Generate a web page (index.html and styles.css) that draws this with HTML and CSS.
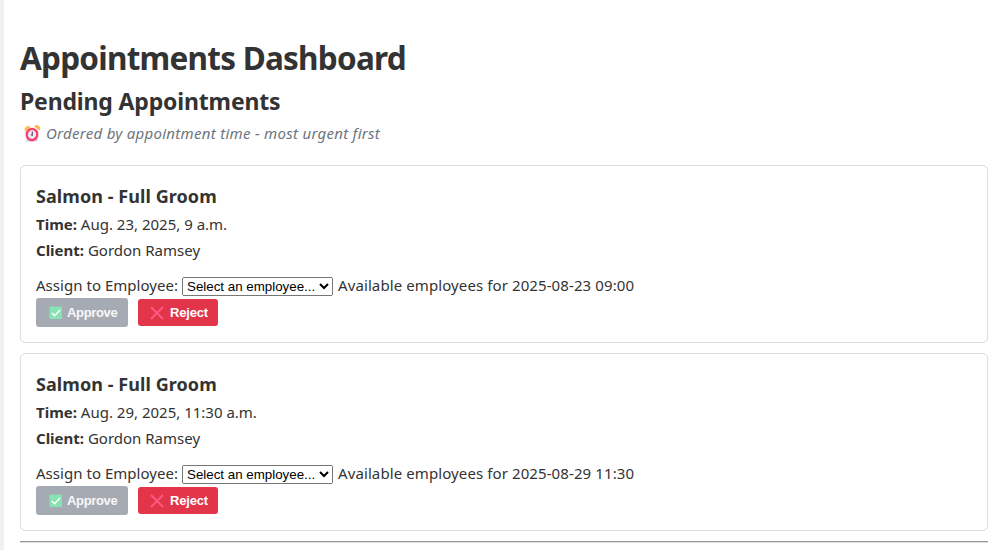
FILE: index.html
```html
<!DOCTYPE html>
<html lang="en">
<head>
<meta charset="utf-8">
<title>Appointments Dashboard</title>
<link rel="stylesheet" href="styles.css">
</head>
<body>
<main class="page">
<h1 class="title">Appointments Dashboard</h1>
<h2 class="subtitle">Pending Appointments</h2>
<p class="note"><svg class="clock" viewBox="0 0 18 18"><path d="M2 16.500h12l1-3H5z" fill="#d9c9f3"/><path d="M2.500 6.500A3.200 3.200 0 0 1 7.500 2.300zM16.500 5.500A3.200 3.200 0 0 0 11 1.600z" fill="#ffb84d"/><ellipse cx="9" cy="9.500" rx="5.300" ry="5.600" fill="#f3e9f5" stroke="#f8406c" stroke-width="2.400" transform="rotate(15 9 9.500)"/><path d="M9.300 6.500v3.700l-1.400-.5" fill="none" stroke="#5d4866" stroke-width="1.100"/></svg><span class="hint">Ordered by appointment time - most urgent first</span></p>
<section class="card">
<h3 class="name">Salmon - Full Groom</h3>
<p class="row"><b>Time:</b> Aug. 23, 2025, 9 a.m.</p>
<p class="row"><b>Client:</b> Gordon Ramsey</p>
<div class="assign"><label class="label">Assign to Employee:</label><select class="pick"><option>Select an employee...</option></select><span class="available">Available employees for 2025-08-23 09:00</span></div>
<div class="actions"><button class="btn approve" type="button"><svg class="mark" viewBox="0 0 14 14"><rect x=".5" y=".5" width="12.500" height="12.500" rx=".8" fill="#88e3b4"/><path d="m3 7 2.600 2.700L11 4" fill="none" stroke="#fff" stroke-width="1.500"/></svg>Approve</button><button class="btn reject" type="button"><svg class="mark" viewBox="0 0 14 14"><path d="m1 1 12 12M13 1 1 13" stroke="#ff5883" stroke-width="1.800"/></svg>Reject</button></div>
</section>
<section class="card">
<h3 class="name">Salmon - Full Groom</h3>
<p class="row"><b>Time:</b> Aug. 29, 2025, 11:30 a.m.</p>
<p class="row"><b>Client:</b> Gordon Ramsey</p>
<div class="assign"><label class="label">Assign to Employee:</label><select class="pick"><option>Select an employee...</option></select><span class="available">Available employees for 2025-08-29 11:30</span></div>
<div class="actions"><button class="btn approve" type="button"><svg class="mark" viewBox="0 0 14 14"><rect x=".5" y=".5" width="12.500" height="12.500" rx=".8" fill="#88e3b4"/><path d="m3 7 2.600 2.700L11 4" fill="none" stroke="#fff" stroke-width="1.500"/></svg>Approve</button><button class="btn reject" type="button"><svg class="mark" viewBox="0 0 14 14"><path d="m1 1 12 12M13 1 1 13" stroke="#ff5883" stroke-width="1.800"/></svg>Reject</button></div>
</section>
<hr class="rule">
</main>
</body>
</html>
```
FILE: styles.css
```css
* { box-sizing: border-box; }
body { margin: 0; height: 550px; overflow: hidden; background: #fff; color: #333; font: 15px/25.6px "Segoe UI", "Noto Sans", sans-serif; }
.page { height: 550px; border-left: 4px solid #eff0f2; padding: 36px 16px 0; }
h1, h2, h3, p { margin: 0; white-space: nowrap; }
.title { font-size: 31.5px; line-height: 44px; font-weight: 700; letter-spacing: -.76px; }
.subtitle { font-size: 23px; line-height: 32px; margin-top: 5px; font-weight: 700; letter-spacing: -.16px; }
.note { display: flex; align-items: center; gap: 5px; padding-left: 3px; height: 26px; margin-top: 4px; margin-bottom: 18px; color: #6c757d; font-style: italic; }
.hint { letter-spacing: .28px; }
.clock { flex: none; width: 18px; height: 18px; }
.card { height: 178px; border: 1px solid #ddd; border-radius: 5px; padding: 18px 15px 0; margin-bottom: 10px; }
.name { font-size: 18px; line-height: 25px; margin-bottom: 3px; font-weight: 700; letter-spacing: .07px; }
.row { height: 25.6px; }
.row b { letter-spacing: 0; }
.assign { display: flex; align-items: center; height: 26px; margin-top: 9.8px; white-space: nowrap; }
.label { width: 146px; letter-spacing: .03px; }
.pick { width: 151px; height: 19px; margin-right: 5px; margin-top: 1px; font: 13.333px Arial, "Liberation Sans", sans-serif; letter-spacing: 0; }
.available { letter-spacing: .1px; }
.actions { display: flex; align-items: center; height: 29px; gap: 10px; margin-top: -1px; }
.btn { display: flex; align-items: center; gap: 4px; border: 0; border-radius: 3px; padding: 1px 0 0 13px; color: #fff; font: bold 13px Arial, "Liberation Sans", sans-serif; letter-spacing: -.35px; }
.approve { width: 92px; height: 29px; background: #a6abb3; color: #f7f7f8; }
.reject { width: 80px; height: 27px; padding-left: 12px; gap: 6px; letter-spacing: -.2px; background: #e23549; }
.mark { flex: none; width: 14px; height: 14px; }
.rule { margin: 0; border: 0; height: 2px; border-top: 1px solid #999; border-bottom: 1px solid #ddd; }
```
